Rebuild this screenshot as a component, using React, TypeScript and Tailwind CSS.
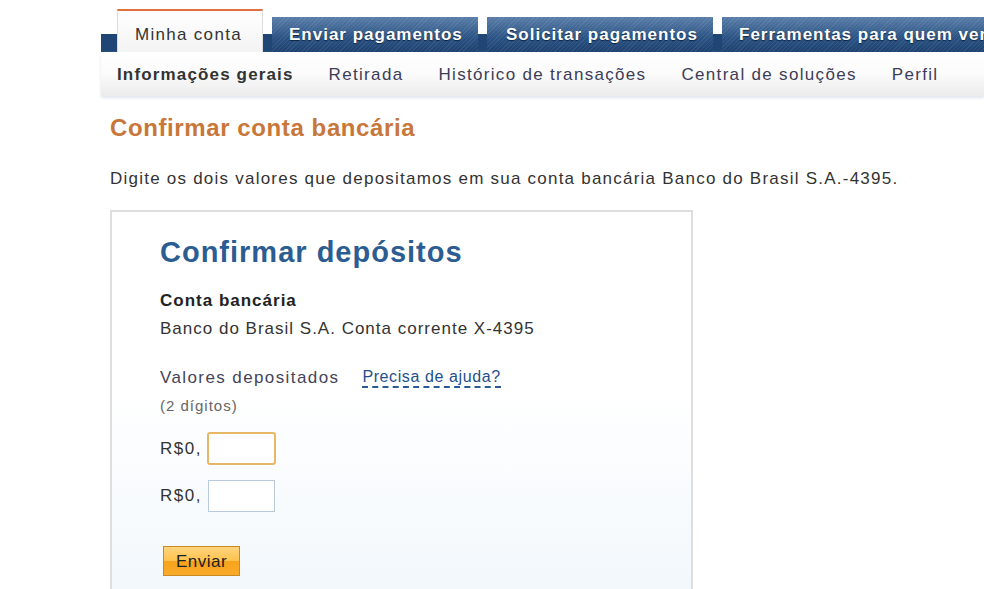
const BLUE_TAB =
  "bg-[repeating-linear-gradient(135deg,rgba(255,255,255,0.07)_0px,rgba(255,255,255,0.07)_1px,transparent_1px,transparent_3px),linear-gradient(to_bottom,#5a7ea8,#2a5283_60%,#1d426f)]";

const SUB_ITEMS = [
  "Retirada",
  "Histórico de transações",
  "Central de soluções",
  "Perfil",
];

function BlueTab({ label, width, pad }: { label: string; width: string; pad: string }) {
  return (
    <div
      className={`${BLUE_TAB} ${width} ${pad} h-[35px] shrink-0 flex items-center text-[17px] font-bold tracking-[1px] text-white whitespace-nowrap [text-shadow:0_1px_1px_#0d2440]`}
    >
      {label}
    </div>
  );
}

export default function App() {
  return (
    <div className="w-[984px] h-[589px] overflow-hidden bg-white font-['Liberation_Sans',Arial,sans-serif] text-[#333]">
      <div className="ml-[101px]">
        {/* Main tabs */}
        <div className="h-[52px] pt-[9px] flex items-end gap-[9px] bg-[linear-gradient(to_bottom,transparent_34px,#1f4674_34px)]">
          <div className="w-[16px] shrink-0 -mr-[9px]" />
          <div className="w-[146px] h-[43px] shrink-0 border-t-2 border-[#e0703e] border-x border-x-[#dcdcdc] bg-[linear-gradient(to_bottom,#ffffff,#f3f3f3)] pl-[17px] pt-[11px] text-[17px] tracking-[1.3px] text-[#333]">
            Minha conta
          </div>
          <BlueTab label="Enviar pagamentos" width="w-[206px]" pad="pl-[17px]" />
          <BlueTab label="Solicitar pagamentos" width="w-[226px]" pad="pl-[19px]" />
          <BlueTab label="Ferramentas para quem vende" width="w-[330px]" pad="pl-[17px]" />
        </div>

        {/* Sub navigation */}
        <div className="h-[44px] pt-[2px] flex items-center gap-[35px] pl-[16px] bg-[linear-gradient(to_bottom,#ffffff,#fbfbfb_50%,#ebebeb)] shadow-[0_2px_3px_#dfe6ee] text-[17px] tracking-[1.32px] text-[#3d3d58] whitespace-nowrap">
          <span className="font-bold tracking-[1.15px] text-[#333]">Informações gerais</span>
          {SUB_ITEMS.map((item) => (
            <span key={item}>{item}</span>
          ))}
        </div>

        {/* Content */}
        <div className="pl-[9px] pt-[18px]">
          <h1 className="text-[24px] font-bold tracking-[0.6px] text-[#c8773a] leading-[28px]">
            Confirmar conta bancária
          </h1>
          <p className="mt-[27px] text-[17px] tracking-[1.23px] leading-[20px] text-[#333] whitespace-nowrap">
            Digite os dois valores que depositamos em sua conta bancária Banco do Brasil S.A.-4395.
          </p>

          <div className="mt-[21px] w-[583px] h-[400px] border-2 border-[#dedede] bg-[linear-gradient(to_bottom,#ffffff_45%,#f1f7fc)] pl-[48px] pt-[22px]">
            <h2 className="text-[29px] font-bold tracking-[1px] text-[#2c5d92] leading-[36px]">
              Confirmar depósitos
            </h2>
            <div className="mt-[21px] text-[17px] font-bold tracking-[1px] text-[#222] leading-[20px]">
              Conta bancária
            </div>
            <div className="mt-[8px] text-[17px] tracking-[1px] text-[#333] leading-[20px]">
              Banco do Brasil S.A. Conta corrente X-4395
            </div>

            <div className="mt-[29px] flex items-end gap-[23px] leading-[20px]">
              <span className="text-[17px] tracking-[1.4px] text-[#44445a]">Valores depositados</span>
              <span className="text-[16px] tracking-[0.6px] text-[#1f4f8a] border-b-2 border-dashed border-[#2a5a96] leading-[18px]">
                Precisa de ajuda?
              </span>
            </div>
            <div className="mt-[8px] text-[15px] tracking-[1px] text-[#666] leading-[20px]">(2 dígitos)</div>

            <div className="mt-[16px] flex items-center gap-[5px]">
              <span className="text-[17px] tracking-[1.5px] text-[#333]">R$0,</span>
              <input
                className="w-[69px] h-[33px] rounded-[3px] border-2 border-[#e6b866] bg-white outline-none"
                aria-label="valor 1"
              />
            </div>
            <div className="mt-[15px] flex items-center gap-[5px]">
              <span className="text-[17px] tracking-[1.5px] text-[#333]">R$0,</span>
              <input
                className="ml-[1px] w-[67px] h-[32px] border border-[#b9c9dc] bg-white outline-none"
                aria-label="valor 2"
              />
            </div>

            <button className="mt-[34px] ml-[3px] w-[77px] h-[30px] border border-[#c98a26] bg-[linear-gradient(to_bottom,#ffd47e,#ffc24d_50%,#f7a41c_50%,#f9ab2a)] text-[17px] tracking-[0.5px] text-[#222] leading-none">
              Enviar
            </button>
          </div>
        </div>
      </div>
    </div>
  );
}
